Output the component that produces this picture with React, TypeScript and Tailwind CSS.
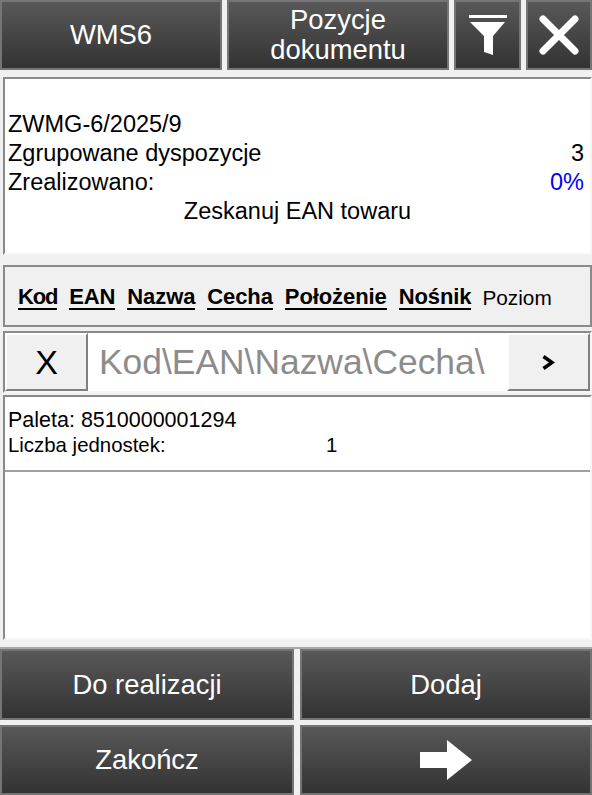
import { ReactNode } from "react";

function DarkButton({ className, children }: { className: string; children: ReactNode }) {
  return (
    <div
      className={`flex items-center justify-center border-2 border-[#757575] bg-[linear-gradient(#585858,#333333)] text-center text-[27.4px] leading-[30px] text-white ${className}`}
    >
      {children}
    </div>
  );
}

function SortLabel({ className = "", children }: { className?: string; children: ReactNode }) {
  return (
    <span className={`border-b-2 border-black text-[22px] leading-[22px] font-bold tracking-[-0.1px] ${className}`}>
      {children}
    </span>
  );
}

const sunken = "border-2 border-t-[#8a8a8a] border-l-[#8a8a8a] border-r-[#f6f6f6] border-b-[#f6f6f6]";
const raised = "border-2 border-t-white border-l-white border-r-[#808080] border-b-[#808080] bg-[#f0f0f0]";

export default function App() {
  return (
    <div className="flex h-[795px] w-[592px] flex-col overflow-hidden bg-[#f0f0f0] font-['Liberation_Sans',Arial,sans-serif] text-black">
      <div className="flex h-[70px] gap-[5px]">
        <DarkButton className="w-[222px]">WMS6</DarkButton>
        <DarkButton className="w-[222px]">
          <span>
            Pozycje
            <br />
            dokumentu
          </span>
        </DarkButton>
        <DarkButton className="w-[67px]">
          <svg width="38" height="40" viewBox="0 0 38 40" fill="white">
            <rect x="0" y="0" width="38" height="3" />
            <path d="M1 7 H36 L24 21 V40 L15 37 V21 Z" />
          </svg>
        </DarkButton>
        <DarkButton className="flex-1">
          <svg width="40" height="40" viewBox="0 0 40 40" stroke="white" strokeWidth="7" strokeLinecap="round">
            <path d="M4 4 L36 36 M36 4 L4 36" />
          </svg>
        </DarkButton>
      </div>

      <div className={`mt-[7px] ml-[3px] flex h-[178px] flex-col bg-white pl-[3px] pt-[31px] text-[23.5px] leading-[29px] ${sunken}`}>
        <div>ZWMG-6/2025/9</div>
        <div className="flex justify-between pr-[6px]">
          <span>Zgrupowane dyspozycje</span>
          <span>3</span>
        </div>
        <div className="flex justify-between pr-[6px]">
          <span>Zrealizowano:</span>
          <span className="text-[#0000ff]">0%</span>
        </div>
        <div className="pr-[3px] text-center">Zeskanuj EAN towaru</div>
      </div>

      <div className="mt-[10px] ml-[3px] flex h-[62px] items-center gap-[12px] border-2 border-[#8a8a8a] bg-[#f0f0f0] pl-[13px] pt-[3px]">
        <SortLabel className="tracking-[-1.2px]">Kod</SortLabel>
        <SortLabel>EAN</SortLabel>
        <SortLabel>Nazwa</SortLabel>
        <SortLabel>Cecha</SortLabel>
        <SortLabel>Położenie</SortLabel>
        <SortLabel>Nośnik</SortLabel>
        <span className="ml-[-1px] text-[20.8px] leading-[24px]">Poziom</span>
      </div>

      <div className={`mt-[4px] ml-[3px] flex h-[62px] bg-white ${sunken}`}>
        <div className={`flex w-[83px] items-center justify-center text-[34px] ${raised}`}>X</div>
        <div className="flex flex-1 items-center overflow-hidden pt-[2px] pl-[11px] text-[35.4px] whitespace-nowrap text-[#8c8c8c]">Kod\EAN\Nazwa\Cecha\</div>
        <div className={`flex w-[83px] items-center justify-center ${raised}`}>
          <svg width="13" height="15" viewBox="0 0 13 15" fill="none" stroke="black" strokeWidth="3.5">
            <path d="M1.5 1.5 L10 7.5 L1.5 13.5" />
          </svg>
        </div>
      </div>

      <div className={`mt-[2px] ml-[3px] h-[245px] bg-white ${sunken}`}>
        <div className="h-[75px] border-b-2 border-[#a0a0a0] pl-[3px] pt-[11px]">
          <div className="text-[21.5px] leading-[24px]">Paleta: 8510000001294</div>
          <div className="flex text-[20.4px] leading-[26px]">
            <span className="w-[318px]">Liczba jednostek:</span>
            <span>1</span>
          </div>
        </div>
      </div>

      <div className="mt-[7px] h-[2px] bg-[#a8a8a8]" />

      <div className="grid flex-1 grid-cols-[294px_292px] grid-rows-[71px_70px] gap-x-[6px] gap-y-[5px]">
        <DarkButton className="">Do realizacji</DarkButton>
        <DarkButton className="">Dodaj</DarkButton>
        <DarkButton className="">Zakończ</DarkButton>
        <DarkButton className="">
          <svg width="52" height="40" viewBox="0 0 52 40" fill="white">
            <path d="M0 12 H27 V0 L52 20 L27 40 V28 H0 Z" />
          </svg>
        </DarkButton>
      </div>
    </div>
  );
}
